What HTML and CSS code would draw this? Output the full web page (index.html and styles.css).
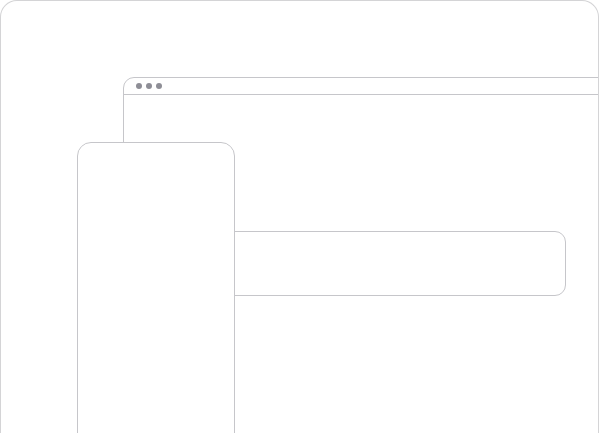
FILE: index.html
```html
<!DOCTYPE html>
<html lang="en">
<head>
    <meta charset="UTF-8">
    <meta name="viewport" content="width=device-width, initial-scale=1.0">
    <title>Devices</title>
    <link rel="stylesheet" href="styles.css">
</head>
<body>

<div class="frame">
    <div class="browser">
        <div class="browser-bar">
            <span class="dot"></span>
            <span class="dot"></span>
            <span class="dot"></span>
        </div>
    </div>
    <div class="card"></div>
    <div class="phone"></div>
</div>

</body>
</html>
```

FILE: styles.css
```css
body {
    margin: 0;
    padding: 0;
    background-color: #fff;
    font-family: "Liberation Sans", Arial, sans-serif;
    overflow: hidden;
}
.frame {
    position: relative;
    width: 599px;
    height: 433px;
    border: 1px solid #d4d4d6;
    border-bottom: none;
    border-radius: 17px 17px 0 0;
    box-sizing: border-box;
    background-color: #fff;
    overflow: hidden;
}
.browser {
    position: absolute;
    left: 122px;
    top: 76px;
    width: 520px;
    height: 420px;
    border: 1px solid #c6c6ca;
    border-radius: 11px 0 0 0;
    background-color: #fff;
}
.browser-bar {
    display: flex;
    align-items: center;
    gap: 4px;
    height: 16px;
    padding-left: 12px;
    border-bottom: 1px solid #c6c6ca;
}
.dot {
    width: 6px;
    height: 6px;
    border-radius: 50%;
    background-color: #8e8e96;
}
.card {
    position: absolute;
    left: 200px;
    top: 230px;
    width: 363px;
    height: 63px;
    border: 1px solid #c6c6ca;
    border-radius: 11px;
    background-color: #fff;
}
.phone {
    position: absolute;
    left: 76px;
    top: 141px;
    width: 156px;
    height: 360px;
    border: 1px solid #c6c6ca;
    border-radius: 14px;
    background-color: #fff;
}
```
